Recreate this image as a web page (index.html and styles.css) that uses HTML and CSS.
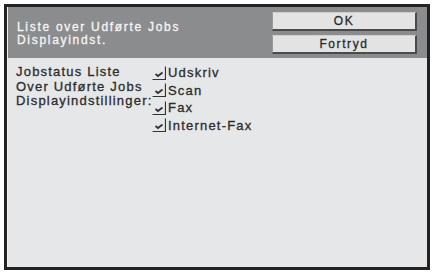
FILE: index.html
```html
<!DOCTYPE html>
<html>
<head>
<meta charset="utf-8">
<link rel="stylesheet" href="styles.css">
</head>
<body>
<div class="frame">
  <div class="header">
    <div class="title">Liste over Udførte Jobs<br>Displayindst.</div>
    <div class="buttons">
      <div class="btn">OK</div>
      <div class="btn">Fortryd</div>
    </div>
  </div>
  <div class="content">
    <div class="label">Jobstatus Liste<br>Over Udførte Jobs<br>Displayindstillinger:</div>
    <div class="options">
      <div class="opt"><svg class="cb" width="14" height="14" viewBox="0 0 14 14"><path d="M0.5 13.5H13.5V0.5" fill="none" stroke="#333" stroke-width="1.2"/><path d="M3.5 8L6 10L10.5 6.5" fill="none" stroke="#333" stroke-width="1.8"/></svg><span>Udskriv</span></div>
      <div class="opt"><svg class="cb" width="14" height="14" viewBox="0 0 14 14"><path d="M0.5 13.5H13.5V0.5" fill="none" stroke="#333" stroke-width="1.2"/><path d="M3.5 8L6 10L10.5 6.5" fill="none" stroke="#333" stroke-width="1.8"/></svg><span>Scan</span></div>
      <div class="opt"><svg class="cb" width="14" height="14" viewBox="0 0 14 14"><path d="M0.5 13.5H13.5V0.5" fill="none" stroke="#333" stroke-width="1.2"/><path d="M3.5 8L6 10L10.5 6.5" fill="none" stroke="#333" stroke-width="1.8"/></svg><span>Fax</span></div>
      <div class="opt"><svg class="cb" width="14" height="14" viewBox="0 0 14 14"><path d="M0.5 13.5H13.5V0.5" fill="none" stroke="#333" stroke-width="1.2"/><path d="M3.5 8L6 10L10.5 6.5" fill="none" stroke="#333" stroke-width="1.8"/></svg><span>Internet-Fax</span></div>
    </div>
  </div>
</div>
</body>
</html>
```
FILE: styles.css
```css
html, body {
  margin: 0;
  background: #ffffff;
}
body {
  padding: 4px 0 0 4px;
  font-family: "Liberation Sans", Arial, sans-serif;
}
.frame {
  width: 420px;
  height: 260px;
  border: 3px solid #232323;
  background: #e6e7e8;
  display: flex;
  flex-direction: column;
  box-shadow: inset 1px 1px 0 #f4f4f4;
}
.header {
  background: #8b8c8d;
  height: 51px;
  box-sizing: border-box;
  padding: 5px 10px 0 9px;
  margin-left: 1px;
  display: flex;
  justify-content: space-between;
  align-items: flex-start;
}
.title {
  color: #f6f6f6;
  font-size: 12px;
  line-height: 13px;
  letter-spacing: 1.7px;
  margin-top: 9px;
  -webkit-text-stroke: 0.3px currentColor;
}
.buttons {
  display: flex;
  flex-direction: column;
  gap: 4px;
}
.btn {
  width: 145px;
  height: 19px;
  box-sizing: border-box;
  background: #e3e3e3;
  border-top: 1px solid #cfcfcf;
  border-left: 1px solid #9a9a9a;
  border-right: 2px solid #4a4a4a;
  border-bottom: 2px solid #4a4a4a;
  color: #2a2a2a;
  font-size: 12px;
  line-height: 16px;
  text-align: center;
  letter-spacing: 1.6px;
  -webkit-text-stroke: 0.3px currentColor;
}
.content {
  display: flex;
  padding: 6px 0 0 9px;
  color: #2c2c2c;
  font-size: 13px;
  letter-spacing: 1.2px;
  -webkit-text-stroke: 0.3px currentColor;
}
.label {
  width: 136px;
  line-height: 14.5px;
  padding-top: 1px;
  white-space: nowrap;
}
.options {
  display: flex;
  flex-direction: column;
}
.opt {
  height: 17.5px;
  display: flex;
  align-items: center;
  gap: 2px;
}
.cb {
  display: block;
  flex: none;
}
```
